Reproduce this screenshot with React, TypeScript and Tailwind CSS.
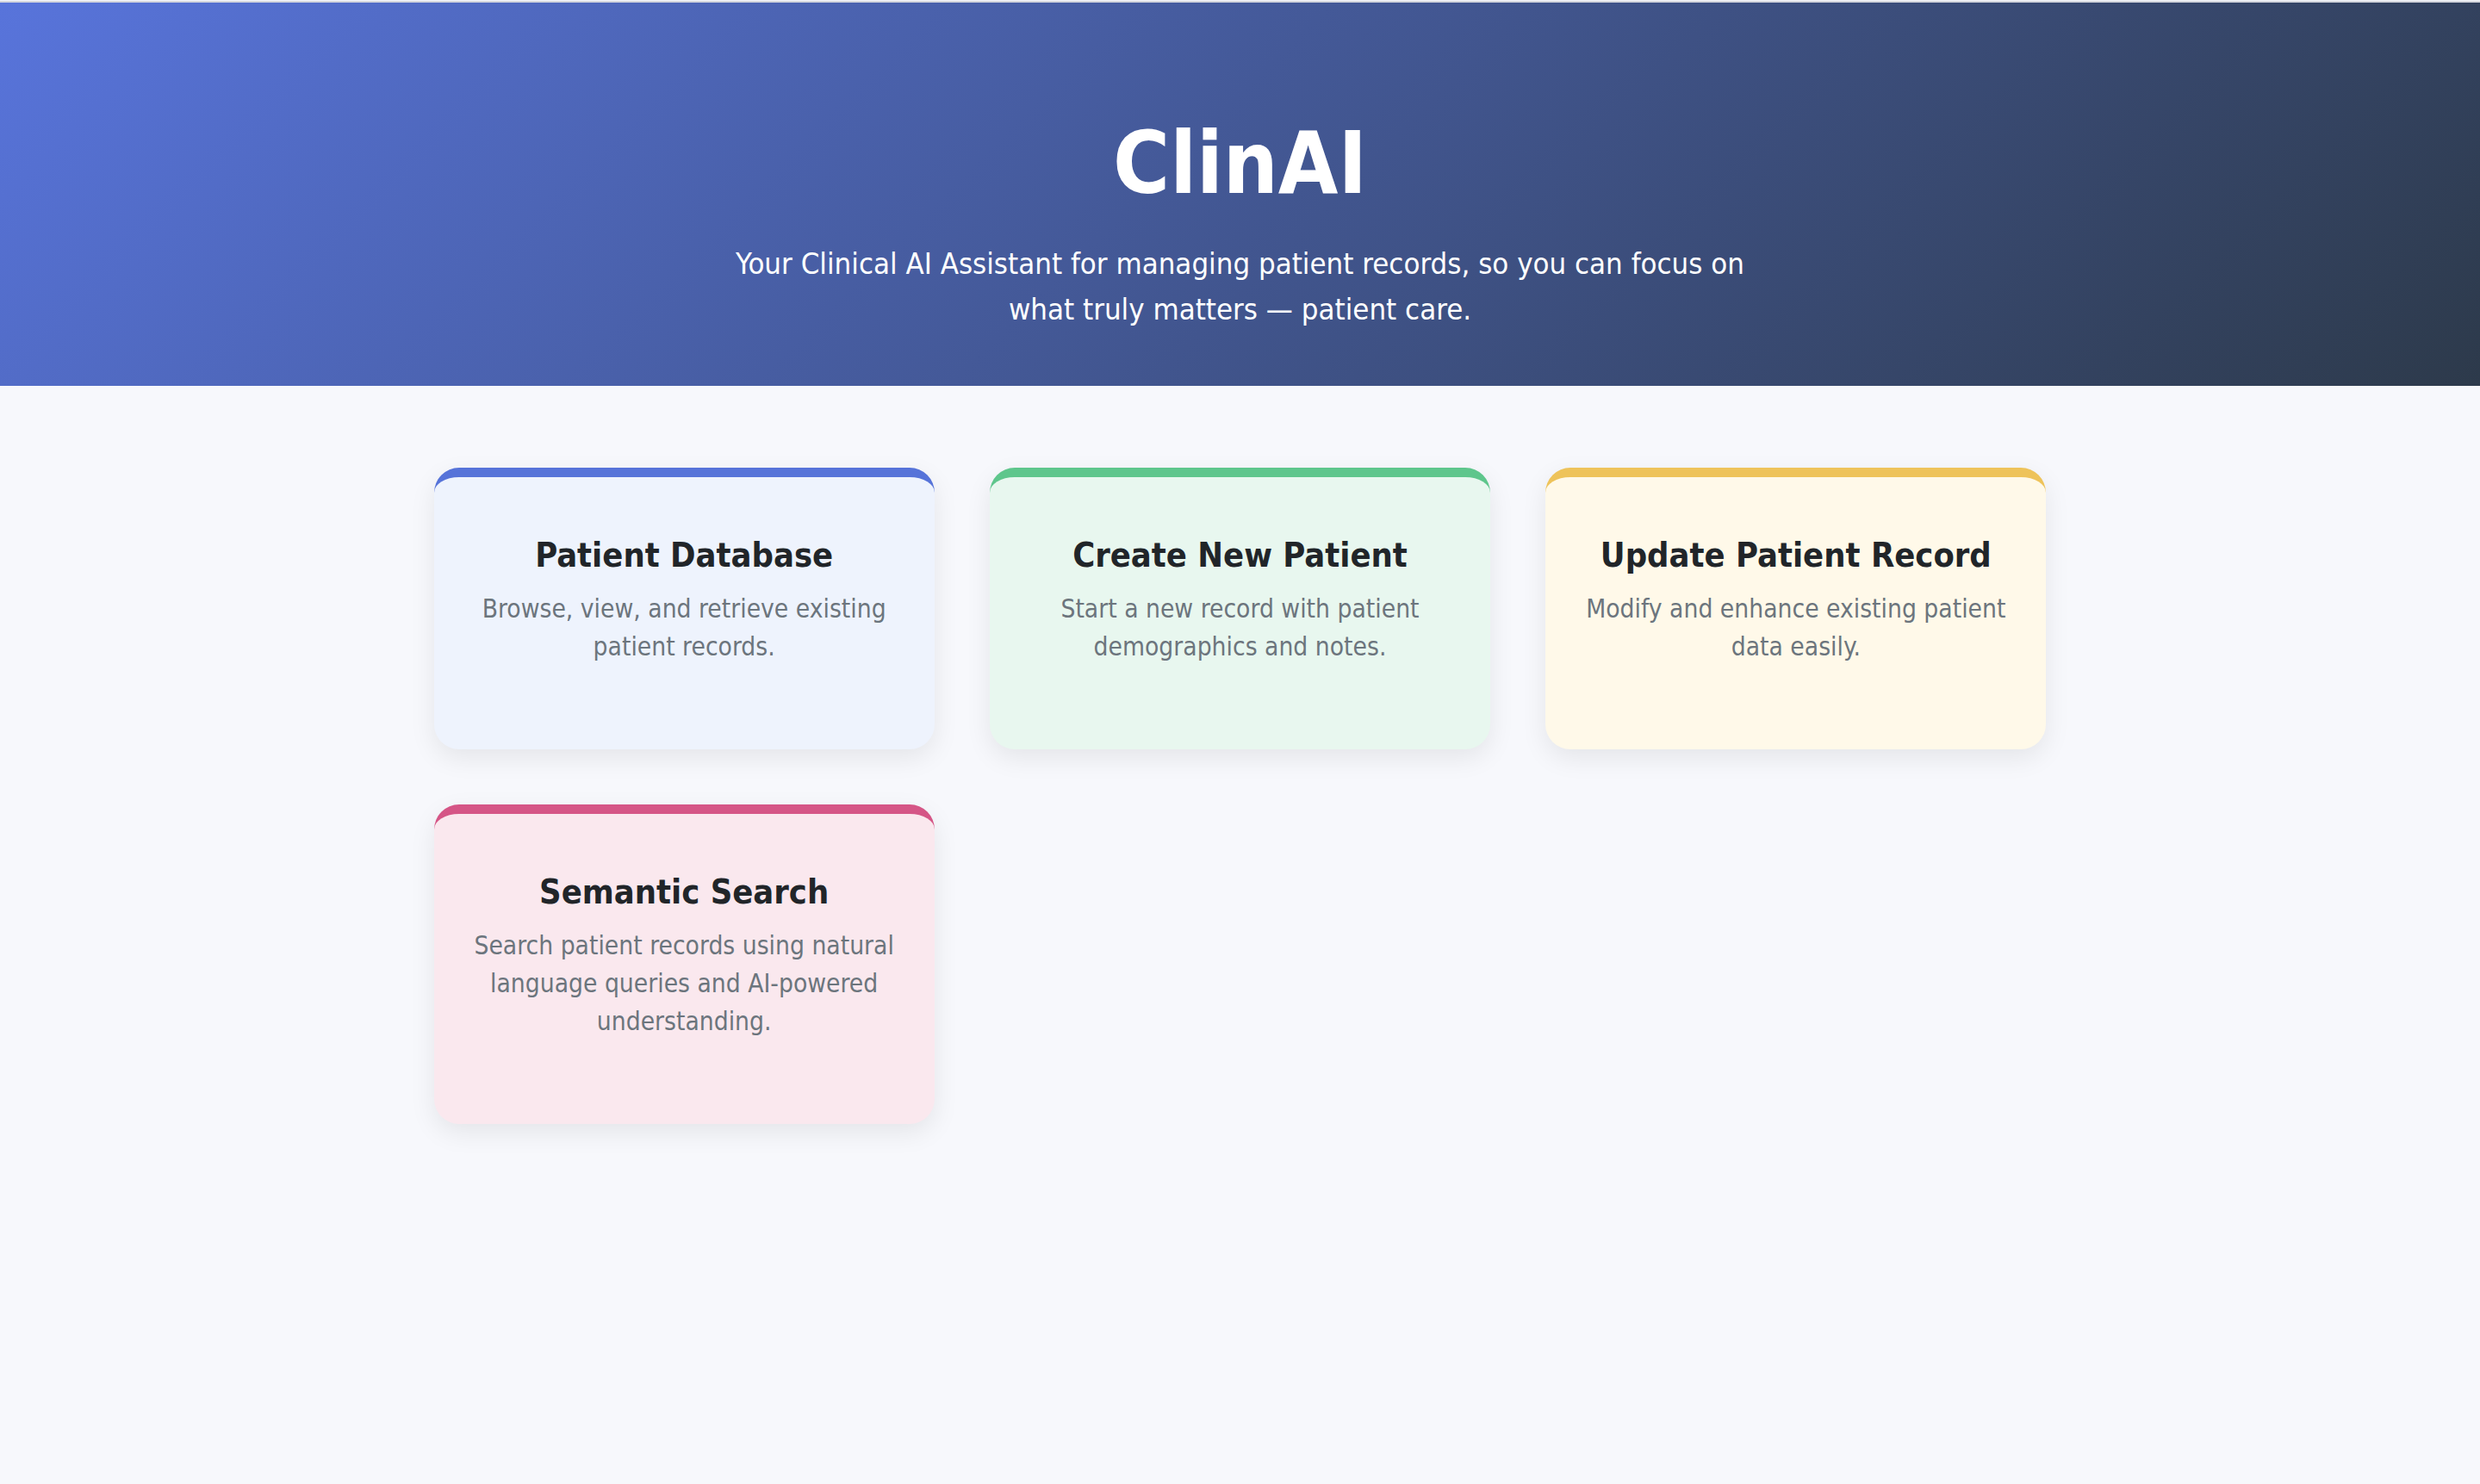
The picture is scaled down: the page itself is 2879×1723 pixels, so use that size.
import React from 'react';

const cards = [
  {
    title: 'Patient Database',
    text: 'Browse, view, and retrieve existing patient records.',
    bar: 'border-[#5673d9]',
    bg: 'bg-[#eef3fd]',
  },
  {
    title: 'Create New Patient',
    text: 'Start a new record with patient demographics and notes.',
    bar: 'border-[#5ec68c]',
    bg: 'bg-[#e8f7ef]',
  },
  {
    title: 'Update Patient Record',
    text: 'Modify and enhance existing patient data easily.',
    bar: 'border-[#eec35a]',
    bg: 'bg-[#fff9e9]',
  },
  {
    title: 'Semantic Search',
    text: 'Search patient records using natural language queries and AI-powered understanding.',
    bar: 'border-[#d55586]',
    bg: 'bg-[#fae8ee]',
  },
];

const App: React.FC = () => {
  return (
    <div className="min-h-screen bg-[#f7f8fc] font-['DejaVu_Sans_Condensed','DejaVu_Sans',sans-serif]">
      <div className="h-px" />
      <div className="h-[2px] bg-[#d5d7de]" />

      {/* Header */}
      <header className="bg-[linear-gradient(135deg,#5874db_0%,#2d3a4b_100%)] pt-[127px] pb-[62px] px-8 text-center text-white">
        <h1 className="text-[100px] font-bold leading-[1.2]">ClinAI</h1>
        <p className="mx-auto mt-[30px] max-w-[1190px] text-[34.5px] leading-[53px]">
          Your Clinical AI Assistant for managing patient records, so you can focus on what truly matters — patient care.
        </p>
      </header>

      {/* Cards */}
      <main className="mx-auto max-w-[1872px] pt-[95px] pb-24">
        <div className="grid grid-cols-3 gap-[64px]">
          {cards.map((card, i) => (
            <div
              key={i}
              className={`rounded-[29px] border-t-[11px] ${card.bar} ${card.bg} px-[43px] pt-[68px] pb-[97px] text-center shadow-[0_10px_30px_rgba(0,0,0,0.08)]`}
            >
              <h2 className="text-[39.5px] font-bold leading-[44px] text-[#212529]">{card.title}</h2>
              <p className="mt-[19px] text-[29.7px] leading-[44px] text-[#6c757d]">{card.text}</p>
            </div>
          ))}
        </div>
      </main>
    </div>
  );
};

export default App;
